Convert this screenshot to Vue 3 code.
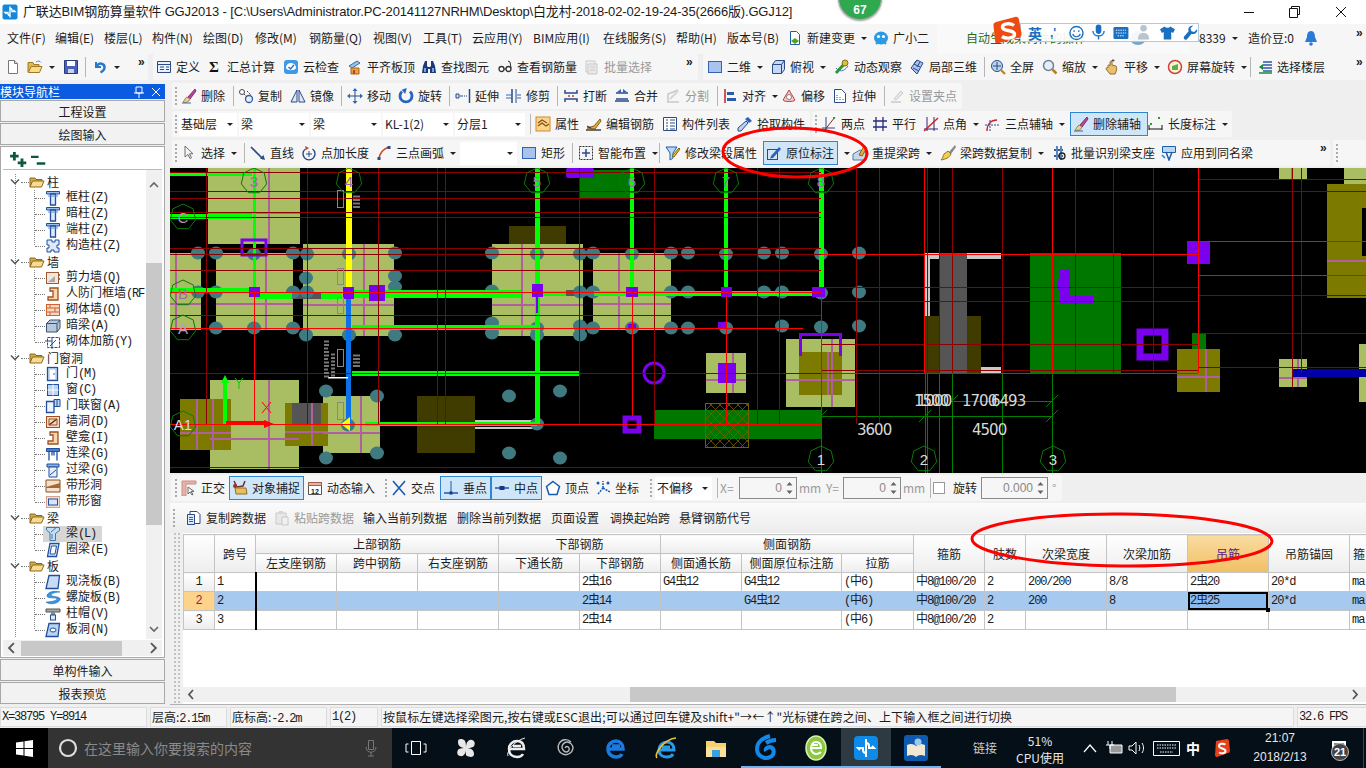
<script setup>
// toolbar icons, 16x16
const ic = {
  doc: '<path d="M3.500 1.500h6l3 3v10h-9z" fill="#fff" stroke="#777"/><path d="M9.500 1.500v3h3" fill="#ddd" stroke="#777"/>',
  open: '<path d="M1 13.500V3.500h5l1 2h5v2" fill="#e0b850" stroke="#a07820"/><path d="M1.500 13.500l2.500-6h11l-2.500 6z" fill="#f6dc8c" stroke="#a07820"/><path d="M9 3c2-1.500 4-1 5 .5" stroke="#4a8fd0" fill="none"/>',
  save: '<path d="M1.500 1.500h13v13h-13z" fill="#4a5fb8" stroke="#2a3a80"/><path d="M4 2h8v5H4z" fill="#fff"/><path d="M5 10h6v4H5z" fill="#c8d4ec"/>',
  undo: '<path d="M4 3v5h5" fill="none" stroke="#2a78c8" stroke-width="2"/><path d="M4.500 7.500C7 3 13 4 12.500 9c-.2 2-2 3.500-4 4.500" fill="none" stroke="#2a78c8" stroke-width="2.500"/>',
  table: '<path d="M1.500 2.500h13v11h-13z" fill="#e8f0fa" stroke="#2a4a88"/><path d="M1.500 5.500h13M4 8h4M4 10.500h4M10 8h3M10 10.500h3" stroke="#2a4a88"/>',
  sigma: '<text x="2" y="13" font-size="15" font-weight="700" fill="#111" font-family="Liberation Serif">Σ</text>',
  cloud: '<rect x="1" y="1" width="14" height="14" rx="3" fill="#3d9ae6"/><path d="M3 9c0-4 4-6 7-4.500 2 .5 3 2.500 3 4.500-1 3-9 3-10 0z" fill="#fff"/><path d="M5.500 8l2 2 3.500-4" fill="none" stroke="#2a78c8" stroke-width="1.500"/>',
  level: '<path d="M2 7l8-5 3 2-8 5z" fill="#9cc0e8" stroke="#3a6aa8"/><path d="M4 9h8v6H4z" fill="#e8a040" stroke="#a86818"/><path d="M6 11h2v4H6z" fill="#c04020"/>',
  binoc: '<path d="M2 7l2-5h2v5l1 1h2l1-1V2h2l2 5 1 7H9v-4H7v4H1z" fill="#1c3a78"/><path d="M3 9h2v4H3zM11 9h2v4h-2z" fill="#7fa0d8"/>',
  glasses: '<circle cx="4.500" cy="10" r="2.500" fill="#fff" stroke="#333" stroke-width="1.300"/><circle cx="11.500" cy="10" r="2.500" fill="#fff" stroke="#333" stroke-width="1.300"/><path d="M7 10h2M14 9l-1-6-2-1" stroke="#333" fill="none"/>',
  batch: '<path d="M2 2h9v11H2z" fill="#eee" stroke="#bbb"/><path d="M4 5h9v10H4z" fill="#e4e4e4" stroke="#bbb"/><path d="M6 8h5M6 11h5" stroke="#bbb"/>',
  rect: '<rect x="1.500" y="2.500" width="13" height="11" fill="#a8c4ee" stroke="#3563b0"/>',
  cube: '<path d="M2.500 5.500l3-4h9v9l-3 4h-9z" fill="#c4d8f0" stroke="#2a4a88"/><path d="M2.500 5.500h9v9M11.500 5.500l3-4" fill="none" stroke="#2a4a88"/>',
  orbit: '<path d="M2 14L12 3" stroke="#2a9a2a" stroke-width="3"/><circle cx="11" cy="4" r="3" fill="#d8c040" stroke="#807018"/><path d="M2 9c3 4 8 4 12-2" fill="none" stroke="#4878b8"/>',
  cubes: '<path d="M8 1l6 3-6 11-6-6z" fill="#a8c4ee" stroke="#2a4a88"/><path d="M5 5l6 3M4 9l6 3M8 1l-3 4M11 3L8 8" stroke="#2a4a88" fill="none"/>',
  zoomall: '<circle cx="7" cy="7" r="5.500" fill="#bcd4f0" stroke="#2a4a88"/><path d="M7 3v8M3 7h8" stroke="#2a4a88"/><path d="M11 11l4 4" stroke="#b88020" stroke-width="2.200"/>',
  zoom: '<circle cx="6.500" cy="6.500" r="5" fill="#e4eefa" stroke="#708090" stroke-width="1.500"/><path d="M10.500 10.500l4 4" stroke="#b88020" stroke-width="2.500"/>',
  hand: '<path d="M4 7c0-2 2-1 2 0V3c0-1 2-1 2 0v3l4 1c1 1 1 5-1 8H6L2 10c0-1 1-2 2-1z" fill="#e8c070" stroke="#907030"/><path d="M9 0v3M7.500 1.500h3" stroke="#555"/>',
  spin: '<circle cx="8" cy="8" r="6.500" fill="#fdf4c8" stroke="#d04040" stroke-width="1.500"/><path d="M5 7l6-2v6H5z" fill="#58b058"/>',
  layers: '<path d="M2 8l4-3v6z" fill="#1a8a3a"/><path d="M6 3h9M6 6h9M6 9h9M6 12h9" stroke="#2a5aa8" stroke-width="1.500"/><path d="M2 14h13" stroke="#1a8a3a" stroke-width="1.500"/>',
  erase: '<path d="M14 1L7 9l2 2 6-8z" fill="#c040a0" stroke="#803070"/><path d="M6 9c-2 1-2 3-4 5 3 1 6 0 7-3z" fill="#e8d090" stroke="#a08040"/><path d="M1 15h9" stroke="#3a6aa8"/>',
  copy: '<circle cx="4" cy="4" r="2.500" fill="#fff" stroke="#445"/><circle cx="11" cy="11" r="3.500" fill="#e8eef8" stroke="#2a5aa8" stroke-width="1.300"/><path d="M6 6l3 3M9 3l4 4" stroke="#445" stroke-dasharray="2 1"/>',
  mirror: '<path d="M7 2v12H1zM9 2v12h6z" fill="#dfe8f4" stroke="#2a4a88"/>',
  move: '<path d="M8 1v14M1 8h14" stroke="#2a4a88"/><path d="M8 0l2.500 3h-5zM8 16l2.500-3h-5zM0 8l3 2.500v-5zM16 8l-3 2.500v-5z" fill="#2a6ab8"/>',
  rot: '<path d="M4 3.500a6 6 0 1 0 8 0" fill="none" stroke="#2a62c0" stroke-width="2.800"/><path d="M8 0v6L3.500 3z" fill="#2a62c0" transform="rotate(15 8 3)"/>',
  extend: '<path d="M14.500 1v14" stroke="#2a4a88" stroke-width="1.500"/><path d="M1 6h3v4H1zM5 8h3" fill="#cfe0f5" stroke="#2a4a88"/><path d="M9 8h4" stroke="#2a4a88" stroke-dasharray="1 1"/>',
  trim: '<path d="M6 1v14" stroke="#2a4a88" stroke-width="1.500"/><path d="M10 1v14" stroke="#2a4a88"/><path d="M0 7h6M11 7h4M0 10h6M11 10h4" stroke="#2a6ab8"/>',
  brk: '<path d="M2 2v3h12V2M2 14v-3h12v3" fill="none" stroke="#2a4a88" stroke-width="1.500"/><path d="M5 8h2M9 8h2" stroke="#c04030" stroke-width="1.500"/>',
  merge: '<path d="M2 5h12M2 11h12M1 13h14" fill="none" stroke="#2a4a88" stroke-width="1.500"/><path d="M7 1L3 4l4 1zM9 1l4 3-4 1z" fill="#2a6ab8"/>',
  split: '<path d="M2 14h12M3 14V6l10-4" fill="none" stroke="#bbb" stroke-width="1.500"/><path d="M5 11l8-8" stroke="#ccc" stroke-width="2"/>',
  align: '<path d="M3 1v14" stroke="#c02020" stroke-width="1.500"/><path d="M5 4h7v3H5zM5 10h9v3H5z" fill="#2a5aa8"/>',
  offset: '<path d="M8 2l6 10c-1 2-11 2-12 0z" fill="#f5c8c8" stroke="#c04040"/><circle cx="8" cy="9" r="2.500" fill="#fff" stroke="#808080"/>',
  stretch: '<path d="M2.500 1.500h7l4 4v9h-11z" fill="#fff" stroke="#2a4a88"/><path d="M5 7v5M8 9v3M11 11v1" stroke="#2a4a88" stroke-dasharray="1 1"/>',
  griph: '<path d="M2 14h10" stroke="#bbb" stroke-width="1.500"/><path d="M5 11l7-8 2 2-7 7z" fill="#e4e4e4" stroke="#bbb"/>',
  attr: '<rect x="1" y="1" width="14" height="14" fill="#f8d48c" stroke="#d88828"/><path d="M3 10l4-3 4 3 3-2M3 7l4-3 5 3" fill="none" stroke="#8a5010" stroke-width="1.300"/>',
  edit: '<path d="M1 12l7-2 6-7 1 2-6 8z" fill="#e8a840" stroke="#806010"/><path d="M0 14h15" stroke="#222" stroke-width="1.300"/><path d="M1 10l4 2" stroke="#222"/>',
  list: '<path d="M1.500 1.500h13v13h-13z" fill="#fff" stroke="#2a4a88"/><path d="M4 4h2M4 7h2M4 10h2M4 13h2M8 4h5M8 7h5M8 10h5M8 13h5" stroke="#2a4a88"/>',
  dropper: '<path d="M11 1l4 4-3 2-4-4z" fill="#2a62c0"/><path d="M9 5l2 2-7 8H1v-3z" fill="#bcd4f0" stroke="#2a4a88"/>',
  two: '<path d="M1 12h13M5 1v14" stroke="#2a4a88"/><path d="M3 15L14 1" stroke="#a02020"/><rect x="12" y="1" width="2" height="2" fill="#2a9a2a"/>',
  para: '<path d="M4 1v14M11 1v14M1 5h14M1 11h14" stroke="#2a2a80" stroke-width="1.300"/>',
  angle: '<path d="M4 1v14M11 1v14M1 13h14" stroke="#2a2a80"/><path d="M1 15L15 2" stroke="#d02020" stroke-width="1.500"/>',
  tri: '<path d="M2 15C2 8 6 4 12 4" fill="none" stroke="#d02020" stroke-width="1.400"/><path d="M0 9h15M5 4v11" stroke="#2a4a88" stroke-dasharray="2 1"/>',
  dim: '<path d="M1 9v5M14 9v5M1 13h13" stroke="#111"/><rect x="2" y="7" width="2" height="2" fill="#2a9a2a"/><rect x="10" y="1" width="2" height="2" fill="#2a9a2a"/>',
  arrow: '<path d="M4 1v11l3-2.500 2 4 1.500-.7-2-4H12z" fill="#f4f4f4" stroke="#707070"/>',
  line: '<path d="M1 2l12 12" stroke="#2a4a88" stroke-width="1.700"/><path d="M15 15l-5-1.500 3.500-3.500z" fill="#2a4a88"/>',
  ptlen: '<path d="M11.500 4a6 6 0 1 1-7 0" fill="none" stroke="#2a4a88" stroke-width="1.400"/><path d="M8 6v6M5 9h6" stroke="#2a4a88"/><path d="M4 1l4 2-3 2z" fill="#c04020"/>',
  arc: '<path d="M3 15C3 8 7 4 13 2" fill="none" stroke="#c05030" stroke-width="1.700"/><rect x="1.500" y="12" width="3" height="3" fill="#2a4a88"/><rect x="11.500" y="1" width="3" height="3" fill="#2a4a88"/>',
  smart: '<rect x="1.500" y="1.500" width="13" height="13" fill="#f4f4f4" stroke="#333" stroke-dasharray="2 1"/><path d="M8 4v8M4 8h8" stroke="#2a4a88" stroke-width="1.500"/>',
  funnel: '<path d="M1 2h11L8 8v5l-3 2V8z" fill="#bcd8f0" stroke="#1f5fa8"/><path d="M7 11l7-8 1 1-6 8z" fill="#f0c040" stroke="#806010"/>',
  origin: '<rect x="1.500" y="4.500" width="10" height="10" fill="#d8e4f4" stroke="#2a4a88"/><path d="M5 11l8-9 2 2-8 9-3 .5z" fill="#2a62c0"/>',
  reext: '<path d="M1 15V9l7-4 6 2v8z" fill="#c8d8ec" stroke="#5078b0"/><path d="M7 10l5-9 3 2-5 8z" fill="#e8a840" stroke="#906010"/>',
  broom: '<path d="M15 0L9 7l2 2 5-7z" fill="#888"/><path d="M8 6l3 3c-2 4-5 5-10 6 2-2 2-4 3-6z" fill="#f0d050" stroke="#907820"/>',
  batchrec: '<path d="M3 4h9v2H3zM3 10h9v2H3z" fill="#2a5a98"/><path d="M5 1h2v14H5zM9 1h2v14H9z" fill="#5a84c0"/><circle cx="11" cy="11" r="3" fill="none" stroke="#222" stroke-width="1.300"/>',
  apply: '<path d="M1.500 1.500h13v6h-13z" fill="#bcd8f0" stroke="#1f5fa8"/><path d="M5 7l3 8 3-8" fill="none" stroke="#1f5fa8" stroke-width="1.500"/><path d="M1 10l3 3" stroke="#2a7ad0" stroke-width="1.500"/>',
  ortho: '<path d="M1 1h14v3H5v12H1z" fill="#e8b0a8" stroke="#c89088"/><path d="M7 7v7l2-2 2 3 1-.6-2-3h3z" fill="#fff" stroke="#666"/>',
  snap: '<path d="M2 1l3 6 6-1 2-5" fill="none" stroke="#703030" stroke-width="1.500"/><path d="M3 8h11l1 6H4z" fill="#e8c060" stroke="#907020"/><circle cx="3" cy="6" r="2" fill="#a03020"/>',
  dyn: '<path d="M1.500 2.500h13v12h-13z" fill="#fff" stroke="#555"/><path d="M1.500 2.500h13v3h-13z" fill="#e8b0a8" stroke="#a06050"/><text x="4" y="13.500" font-size="7" font-weight="700" fill="#222" font-family="Liberation Sans">12</text>',
  cross: '<path d="M2 1l12 14M14 1L2 15" stroke="#1a5ab0" stroke-width="1.600"/>',
  perp: '<path d="M1 13h14" stroke="#1a5ab0" stroke-width="1.500"/><path d="M8 1v11" stroke="#1a5ab0"/><rect x="6.500" y="11.500" width="3" height="3" fill="#1a3a80"/>',
  mid: '<path d="M1 8h14" stroke="#1a5ab0" stroke-width="1.500"/><rect x="5.500" y="6" width="5" height="4" fill="#1a3a80"/>',
  vertex: '<path d="M8 1.500l6.500 5-2.500 8H4l-2.500-8z" fill="#fff" stroke="#1a5ab0" stroke-width="1.500"/>',
  coord: '<path d="M3 14l5-6M8 8V1M8 8l7 4" stroke="#1a5ab0" stroke-dasharray="2 1" stroke-width="1.500" fill="none"/><circle cx="3" cy="3" r="1.500" fill="#1a5ab0"/><circle cx="13" cy="3" r="1.500" fill="#1a5ab0"/>',
  sheet: '<path d="M4 1.500h7l3 3v9H4z" fill="#fff" stroke="#2a4a88"/><path d="M1.500 4.500h7v10h-7z" fill="#dfe8f6" stroke="#2a4a88"/><path d="M3 7.500h4M3 9.500h4M3 11.500h4" stroke="#2a62c0"/>',
  paste: '<path d="M2 3h10v11H2z" fill="#e4e4e4" stroke="#bbb"/><path d="M5 1h4v3H5z" fill="#ccc"/><path d="M8 7h6v8H8z" fill="#f0f0f0" stroke="#bbb"/>',
  logo: '<rect x=".5" y=".5" width="15" height="15" rx="2" fill="#1287dc"/><path d="M8 2.500v11M8 4.500a2 2 0 0 1 2 2v1H13l-1.500-1.500M8 11.500a2 2 0 0 1-2-2v-1H3l1.500 1.500" fill="none" stroke="#fff" stroke-width="1.400"/>',
  newdoc: '<path d="M3.500 1.500h6l3 3v10h-9z" fill="#fff" stroke="#1f5fa8"/><path d="M8 8l4 3-4 3-4-3z" fill="#55a020"/>',
  bot: '<ellipse cx="8" cy="8" rx="7" ry="6.500" fill="#2a9ae8"/><circle cx="5.500" cy="6.500" r="1.600" fill="#fff"/><circle cx="10.500" cy="6.500" r="1.600" fill="#fff"/><path d="M3 14l2-2M13 14l-2-2" stroke="#2a9ae8" stroke-width="2"/>',
  bell: '<path d="M8 1c3 0 4 3 4 6l2 5H2l2-5c0-3 1-6 4-6z" fill="#2a7ad8"/><circle cx="8" cy="14" r="1.800" fill="#2a7ad8"/>',
  folder: '<path d="M1 13V4h5l1 1.500h6V7" fill="#d4aa48" stroke="#8a6a20"/><path d="M1 13l2.500-6H15l-2.500 6z" fill="#f6dc8c" stroke="#8a6a20"/>',
  column: '<path d="M1.500 1.500h13v2.500h-13z" fill="#9cc0ec" stroke="#1f4fa0"/><path d="M5.500 4h5v11h-5z" fill="#dfe9f8" stroke="#1f4fa0" stroke-width="1.300"/><path d="M3 6h10" stroke="#5c8ad0"/>',
  gear: '<path d="M4 2h3v2h3V2h4v5h-2v3h2v4H9v-2H6v2H2v-4h2V7H2V2z" fill="#dfe9f8" stroke="#1f4fa0"/>',
  shear: '<rect x="1.500" y="2.500" width="12" height="11" fill="#f0e8e0" stroke="#a05a30"/><path d="M3 12l7-6v6z" fill="#b0a8a0"/><path d="M14.500 4v2M14.500 8v2" stroke="#d06020"/>',
  bracket: '<path d="M5 2h8v12H3v-3h5V5H5z" fill="#f8d8b0" stroke="#a05020" stroke-width="1.300"/>',
  brick: '<rect x="1.500" y="2.500" width="13" height="11" fill="#f8d8c0" stroke="#d06030"/><path d="M1.500 6h13M1.500 10h13M5 2.500V6M10 6v4M5 10v3.500" stroke="#d06030"/>',
  hbeam: '<path d="M1.500 5.500L5 2h10v8l-3 4H1.500z" fill="#b8c8dc" stroke="#3a5070"/><path d="M1.500 5.500H12v8.500M12 5.500L15 2" fill="none" stroke="#3a5070"/>',
  rebar: '<rect x="2.500" y="3.500" width="12" height="10" fill="none" stroke="#1f4fa0" stroke-dasharray="3 1"/><path d="M0 7h7M7 3v12M5 12l6-6" stroke="#1f4fa0"/>',
  door: '<rect x="2.500" y="1.500" width="10" height="13" fill="#c4d8f4" stroke="#1f4fa0" stroke-width="1.300"/><path d="M5 4h5v9H5z" fill="#fff"/><circle cx="9" cy="8" r=".8" fill="#1f4fa0"/>',
  win: '<rect x="2.500" y="2.500" width="11" height="11" fill="#bcd4f2" stroke="#1f4fa0"/><path d="M8 2.500v11M2.500 8h11" stroke="#fff"/>',
  dwin: '<path d="M9 1.500h6v7H9z" fill="#bcd4f2" stroke="#1f4fa0"/><path d="M1.500 3.500H9v11H1.500z" fill="#eef4fc" stroke="#1f4fa0" stroke-width="1.300"/><path d="M12 1.500v7" stroke="#1f4fa0"/>',
  hole: '<rect x="1.500" y="2.500" width="13" height="11" fill="#f8d8c0" stroke="#a05020"/><path d="M4 11l8-6" stroke="#4a2a10" stroke-width="1.300"/><path d="M4 5h8v6H4z" fill="none" stroke="#a05020"/>',
  link: '<path d="M1.500 2.500h13v3h-13z" fill="#4a7cc8" stroke="#1f4fa0"/><path d="M4 5.500v9M12 5.500v9M7 5.500v4M9 5.500v4" stroke="#1f4fa0" stroke-width="1.300"/>',
  lintel: '<path d="M2 2h12v3H2z" fill="#8ab0e4" stroke="#1f4fa0"/><path d="M4 5h8v10H4z" fill="#e6eefa" stroke="#1f4fa0"/><path d="M5 13l6-5" stroke="#1f4fa0"/>',
  shole: '<path d="M1 2h14v12H1z" fill="#f4e0cc" stroke="#8a5020"/><path d="M1 9l14-4v5H1z" fill="#a86830"/>',
  swin: '<rect x="1.500" y="2.500" width="13" height="11" fill="#f4dcd0" stroke="#d8a090"/><rect x="3.500" y="5" width="9" height="6" fill="#d8e4f8" stroke="#1f4fa0"/>',
  beam: '<path d="M1.500 1.500h13v3l-4 3v7H5V7l-3.500-3z" fill="#c4dcf4" stroke="#3a78b0"/><path d="M6 6l6-5M7 13V8" stroke="#3a78b0"/>',
  ring: '<path d="M5 1.500h9l-2.500 13h-9z" fill="#dde9f8" stroke="#1f4fa0" stroke-width="1.300"/><path d="M6.500 4h5l-1.500 8H5z" fill="#fff" stroke="#1f4fa0"/>',
  slab: '<path d="M4 1.500h10.500l-1.500 13H1z" fill="#c8dcf6" stroke="#1f4fa0" stroke-width="1.300"/>',
  spiral: '<path d="M15 2c-8-2-13 1-13 4s10 1 10 3-8 3-11 3c3 3 12 2 14-2s-9-3-9-5 6-3 9-3z" fill="#3a96e0" stroke="#1f6fc0" stroke-width=".6"/>',
  cap: '<path d="M1 3h14v3H1z" fill="#a8a8a8" stroke="#555"/><path d="M6 6h4v3H6z" fill="#888"/><rect x="5.500" y="9" width="5" height="5" fill="#dfe9f8" stroke="#1f4fa0"/>',
  shole2: '<path d="M4 1.500h10.500l-1.500 13H1z" fill="#bcd4f2" stroke="#1f4fa0" stroke-width="1.300"/><ellipse cx="8" cy="8" rx="3" ry="2" fill="#fff" stroke="#1f4fa0"/>',
  avatar: '<ellipse cx="8" cy="8" rx="8" ry="7" fill="#7aa6c8"/>',
}

// tools are listed by the x where they start; widths follow from the next one
const T = (x, i, t, o = {}) => ({ k: 'tool', x, i, t, ...o })
const S = x => ({ k: 'sep', x })
const G = x => ({ k: 'grip', x })
const P = x => ({ k: 'gap', x })
const M = x => ({ k: 'more', x })
const C = (x, t) => ({ k: 'combo', x, t })
const N = (x, t) => ({ k: 'num', x, t })
const X = x => ({ k: 'chk', x })

function bar(start, end, items, cls = '') {
  const list = items.map((it, n) => {
    const next = items[n + 1]
    return { ...it, w: (next ? next.x : end) - it.x }
  })
  return { start, end, cls, pad: items[0].x - start, items: list }
}

const rows = [
  { cls: 'r-menu', origin: 0, bars: [
    bar(0, 937, [
      T(7, null, '文件(F)'), T(55, null, '编辑(E)'), T(104, null, '楼层(L)'), T(152, null, '构件(N)'),
      T(203, null, '绘图(D)'), T(255, null, '修改(M)'), T(309, null, '钢筋量(Q)'), T(373, null, '视图(V)'),
      T(423, null, '工具(T)'), T(472, null, '云应用(Y)'), T(533, null, 'BIM应用(I)'),
      T(603, null, '在线服务(S)'), T(676, null, '帮助(H)'), T(727, null, '版本号(B)'),
      T(787, 'newdoc', '新建变更', { caret: 1 }), T(873, 'bot', '广小二'),
    ], 'plain'),
    bar(937, 1190, [T(966, null, '自动生成梁构件的操作', { green: 1 }), T(1130, 'avatar', '')], 'tab'),
    bar(1190, 1366, [T(1199, null, '8339', { caret: 1 }), T(1248, null, '造价豆:0'), T(1303, 'bell', ''), M(1356)], 'plain'),
  ] },
  { cls: 'r-top', origin: 0, bars: [
    bar(0, 148, [T(5, 'doc', ''), T(27, 'open', '', { caret: 1 }), T(63, 'save', ''), S(85), T(92, 'undo', '', { caret: 1 }), M(138)]),
    bar(153, 698, [
      T(156, 'table', '定义'), T(207, 'sigma', '汇总计算'), T(283, 'cloud', '云检查'), T(347, 'level', '平齐板顶'),
      T(421, 'binoc', '查找图元'), T(497, 'glasses', '查看钢筋量'), T(584, 'batch', '批量选择', { off: 1 }), M(686),
    ]),
    bar(703, 1366, [
      T(707, 'rect', '二维', { caret: 1 }), T(770, 'cube', '俯视', { caret: 1 }), T(834, 'orbit', '动态观察'),
      T(909, 'cubes', '局部三维'), S(984), T(990, 'zoomall', '全屏'), T(1042, 'zoom', '缩放', { caret: 1 }),
      T(1104, 'hand', '平移', { caret: 1 }), T(1167, 'spin', '屏幕旋转', { caret: 1 }), S(1250),
      T(1257, 'layers', '选择楼层'), M(1356),
    ]),
  ] },
  { cls: 'r-a', origin: 170, bars: [
    bar(172, 962, [
      G(175), T(181, 'erase', '删除'), S(233), T(238, 'copy', '复制'), T(290, 'mirror', '镜像'), S(341),
      T(347, 'move', '移动'), T(398, 'rot', '旋转'), S(449), T(455, 'extend', '延伸'), T(506, 'trim', '修剪'), S(557),
      T(563, 'brk', '打断'), T(614, 'merge', '合并'), T(665, 'split', '分割', { off: 1 }), S(717),
      T(722, 'align', '对齐', { caret: 1 }), T(781, 'offset', '偏移'), T(832, 'stretch', '拉伸'), S(884),
      T(889, 'griph', '设置夹点', { off: 1 }),
    ]),
  ] },
  { cls: 'r-b', origin: 170, bars: [
    bar(172, 810, [
      G(175), C(179, '基础层'), C(239, '梁'), C(311, '梁'), C(383, 'KL-1(2)'), C(455, '分层1'), S(530),
      T(535, 'attr', '属性'), T(586, 'edit', '编辑钢筋'), T(662, 'list', '构件列表'), T(737, 'dropper', '拾取构件'),
    ]),
    bar(812, 1232, [
      G(815), T(821, 'two', '两点'), T(872, 'para', '平行'), T(923, 'angle', '点角', { caret: 1 }),
      T(985, 'tri', '三点辅轴', { caret: 1 }), T(1070, 'erase', '删除辅轴', { on: 1 }), T(1148, 'dim', '长度标注', { caret: 1 }),
    ]),
  ] },
  { cls: 'r-c', origin: 170, bars: [
    bar(172, 1330, [
      G(175), T(181, 'arrow', '选择', { caret: 1 }), S(244), T(250, 'line', '直线'), T(301, 'ptlen', '点加长度'),
      T(376, 'arc', '三点画弧', { caret: 1 }), C(460, ''), T(521, 'rect', '矩形'), S(572), T(578, 'smart', '智能布置', { caret: 1 }), S(659),
      T(665, 'funnel', '修改梁段属性'), T(763, 'origin', '原位标注', { on: 1 }), T(838, null, '', { caret: 1 }),
      T(852, 'reext', '重提梁跨', { caret: 1 }), T(940, 'broom', '梁跨数据复制', { caret: 1 }),
      T(1051, 'batchrec', '批量识别梁支座'), T(1161, 'apply', '应用到同名梁'), M(1320),
    ]),
    bar(1333, 1366, [G(1336)]),
  ] },
  { cls: 'r-snap', origin: 170, bars: [
    bar(171, 1062, [
      G(175), T(181, 'ortho', '正交'), T(229, 'snap', '对象捕捉', { on: 1 }), P(304), T(307, 'dyn', '动态输入'), G(385),
      T(391, 'cross', '交点'), T(440, 'perp', '垂点', { on: 1 }), T(491, 'mid', '中点', { on: 1 }), P(542),
      T(545, 'vertex', '顶点'), T(595, 'coord', '坐标'), G(650), C(655, '不偏移'), S(717),
      T(720, null, 'X=', { off: 1 }), N(739, '0'), T(799, null, 'mm', { off: 1 }), T(826, null, 'Y=', { off: 1 }), N(843, '0'),
      T(903, null, 'mm', { off: 1 }), S(930), X(933), T(953, null, '旋转'), N(981, '0.000'), T(1052, null, '°', { off: 1 }),
    ]),
  ] },
  { cls: 'r-tbl', origin: 170, bars: [
    bar(170, 1366, [
      G(173), T(186, 'sheet', '复制跨数据'), T(274, 'paste', '粘贴跨数据', { off: 1 }), T(363, null, '输入当前列数据'),
      T(457, null, '删除当前列数据'), T(551, null, '页面设置'), T(610, null, '调换起始跨'), T(679, null, '悬臂钢筋代号'),
    ], 'plain'),
  ] },
]
rows.forEach(r => {
  let edge = r.origin
  r.bars.forEach(b => { b.ml = b.start - edge; edge = b.end })
})

// module tree
const tree = [
  { t: '柱', kids: [['框柱', '(Z)', 'column'], ['暗柱', '(Z)', 'column'], ['端柱', '(Z)', 'column'], ['构造柱', '(Z)', 'gear']] },
  { t: '墙', kids: [['剪力墙', '(Q)', 'shear'], ['人防门框墙', '(RF', 'bracket'], ['砌体墙', '(Q)', 'brick'], ['暗梁', '(A)', 'hbeam'], ['砌体加筋', '(Y)', 'rebar']] },
  { t: '门窗洞', kids: [['门', '(M)', 'door'], ['窗', '(C)', 'win'], ['门联窗', '(A)', 'dwin'], ['墙洞', '(D)', 'hole'], ['壁龛', '(I)', 'bracket'], ['连梁', '(G)', 'link'], ['过梁', '(G)', 'lintel'], ['带形洞', '', 'shole'], ['带形窗', '', 'swin']] },
  { t: '梁', kids: [['梁', '(L)', 'beam', 1], ['圈梁', '(E)', 'ring']] },
  { t: '板', kids: [['现浇板', '(B)', 'slab'], ['螺旋板', '(B)', 'spiral'], ['柱帽', '(V)', 'cap'], ['板洞', '(N)', 'shole2']] },
]

// table
const colW = [31, 41, 81, 81, 81, 81, 81, 81, 100, 72, 71, 41, 81, 81, 81, 81, 81]
const tRows = [
  { no: 1, cells: ['1', '', '', '', '', '2虫16', 'G4虫12', 'G4虫12', '(中6)', '中8@100/20', '2', '200/200', '8/8', '2虫20', '20*d', 'ma'] },
  { no: 2, sel: true, cells: ['2', '', '', '', '', '2虫14', '', 'G4虫12', '(中6)', '中8@100/20', '2', '200', '8', '2虫25', '20*d', 'ma'] },
  { no: 3, cells: ['3', '', '', '', '', '2虫14', '', '', '(中6)', '中8@100/20', '2', '', '', '', '', 'ma'] },
]

// drawing canvas, in screen coordinates
const fills = [
  ['#a9bd62', [[208,168,92,76],[303,244,91,92],[170,253,31,77],[216,253,77,77],[492,244,91,92],[593,253,78,77],[210,380,89,89],[323,396,57,57],[706,353,40,40],[786,339,69,68],[1279,168,28,11],[1344,168,22,40],[1279,359,28,28],[1359,344,7,58]]],
  ['#7d7a00', [[180,399,51,51],[285,403,43,43],[799,352,43,43],[1177,349,43,43],[1327,184,39,114]]],
  ['#000', [[1362,208,4,48]]],
  ['#403c00', [[509,226,57,18],[417,396,58,57],[924,316,57,57]]],
  ['#007800', [[580,170,50,28],[654,410,167,29],[1030,253,91,120],[1192,333,14,16]]],
  ['#c8c8c8', [[924,253,77,6],[924,253,6,63],[981,367,20,6],[475,420,59,2],[475,427,59,2]]],
  ['#555', [[939,253,28,120],[292,293,29,6],[566,290,28,6],[292,403,29,21]]],
]
const mauve = [
  [269,168,76],[176,253,77],[266,253,77],[364,244,92],[522,244,92],[619,253,77],[269,380,89],[197,399,51],[213,399,51],[312,403,43],[361,396,57],[733,353,40],[828,352,43],[832,339,68],[1206,349,43],[1298,359,28],[1292,168,11],
].map(([x, y, h]) => `M${x} ${y}v${h}`).concat([
  [208,213,92],[170,304,31],[216,304,77],[303,305,91],[492,305,91],[593,304,78],[210,439,89],[180,433,51],[285,432,43],[323,433,57],[706,380,40],[786,380,69],[1177,377,43],[1279,378,28],[1327,261,39],
].map(([x, y, w]) => `M${x} ${y}h${w}`)).join('')

const hl = (y, a, b) => `M${a} ${y + 0.5}H${b}`
const vl = (x, a, b) => `M${x + 0.5} ${a}V${b}`
const darkRed = [
  ...[172,198,212,217,248,254,270,315,373,467].map(y => hl(y, 170, 821)),
  hl(191, 170, 1366),
  ...[287,301,344,370].map(y => hl(y, 821, 1198)),
  ...[179,295,333,367].map(y => hl(y, 1198, 1366)),
  ...[206,307,378,437,445,579,654,757,779,856,879].map(x => vl(x, 168, 424)),
  ...[927,939,952,1002,1075,1113,1153,1301].map(x => vl(x, 168, 373)),
  vl(1292, 168, 387),
].join('')
const red = [
  hl(292, 170, 821), hl(328, 170, 803), hl(424, 170, 821), hl(254, 821, 1198), hl(373, 821, 1198), hl(241, 1198, 1366), hl(275, 1198, 1366),
  vl(254, 292, 424), vl(632, 296, 416), vl(726, 296, 424), vl(821, 296, 373), vl(924, 168, 373), vl(1052, 168, 373), vl(1198, 168, 373),
].join('')
const grid = [
  ...[821,925,927,939,952,1002,1052].map(x => vl(x, 373, 473)),
  hl(401, 952, 1052), hl(416, 821, 1052),
  ...[[821,416],[925,416],[1052,416],[952,401],[1002,401],[1052,401]].map(([x, y]) => `M${x - 6} ${y + 6}L${x + 6} ${y - 6}`),
].join('')

const piles = [
  [198,253],[216,253],[254,254],[293,253],[307,254],[349,254],[395,253],[492,253],[537,254],[580,254],[593,253],[632,254],[671,253],[688,253],[726,254],[764,253],[782,253],[821,254],[859,253],
  [306,278],[395,276],[198,292],[216,292],[293,292],[307,292],[395,287],[492,291],[580,292],[593,292],[671,292],[688,292],[764,292],[782,292],[821,293],[859,292],
  [216,328],[254,328],[293,328],[492,323],[537,328],[580,326],[593,328],[632,328],[671,328],[688,328],[726,328],[782,326],[821,327],[859,326],
  [306,335],[349,335],[395,335],[492,333],[537,335],[580,335],
  [326,391],[377,396],[509,396],[560,391],[326,458],[377,453],[509,453],[560,458],[537,424],[348,425],
]
const beams = [
  [170,172,82,4],[170,214,82,5],[170,288,80,5],[255,293,37,6],[321,293,21,6],[354,290,167,8],[543,291,23,5],[594,291,218,5],[352,325,185,5],[352,371,227,5],[365,422,172,4],
  [253,168,3,122],[535,168,5,256],[630,168,4,122],[724,168,4,122],[819,168,5,122],
]
const purple = [
  [249,287,11,10],[343,287,11,12],[369,285,16,16],[532,284,11,13],[536,297,2,16],[626,287,12,10],[721,287,11,10],[628,324,8,5],[718,322,9,6],[718,363,18,20],[812,287,13,10],
  [1060,270,10,34],[1058,279,3,11],[1060,296,33,8],[1187,241,23,23],
]
const frames = [[242,240,24,15,3],[625,418,14,13,5],[1140,332,25,25,7]]
const grayBoxes = [[337,190,6,17],[337,268,6,16],[337,297,6,16],[337,349,6,17],[337,402,6,17]]
const heptagon = (cx, cy) => Array.from({ length: 7 }, (_, n) => {
  const a = -Math.PI / 2 + (n * 2 * Math.PI) / 7
  return `${(cx + 13 * Math.cos(a)).toFixed(1)},${(cy + 13 * Math.sin(a)).toFixed(1)}`
}).join(' ')
const bubbles = [
  [254,181,'3','#9370a8'],[349,181,'4','#9370a8'],[537,181,'5','#9370a8'],[632,181,'6','#9370a8'],[726,181,'7','#9370a8'],[821,181,'8','#9370a8'],
  [183,217,'C','#b090b8'],[183,293,'B','#9370a8'],[183,328,'A','#b0a0c0'],[183,424,'A1','#d8d8e8'],
  [821,459,'1','#ddd'],[924,459,'2','#ddd'],[1053,459,'3','#ddd'],
]
const dims = [[914,406,'1500'],[917,406,'1000'],[962,406,'1700'],[991,406,'6493'],[857,435,'3600'],[972,435,'4500']]
</script>

<template>
  <div class="app">
    <div class="title">
      <svg class="ic" viewBox="0 0 16 16" v-html="ic.logo" />
      <span class="title-text">广联达BIM钢筋算量软件 GGJ2013 - [C:\Users\Administrator.PC-20141127NRHM\Desktop\白龙村-2018-02-02-19-24-35(2666版).GGJ12]</span>
      <div class="winbtns">
        <svg width="14" height="14" viewBox="0 0 14 14"><path d="M2 7.500h10" stroke="#111" /></svg>
        <svg width="14" height="14" viewBox="0 0 14 14"><path d="M3.500 3.500v-2h8v8h-2M1.500 3.500h8v9h-8z" fill="none" stroke="#111" /></svg>
        <svg width="14" height="14" viewBox="0 0 14 14"><path d="M2 2l10 10M12 2L2 12" stroke="#111" /></svg>
      </div>
    </div>

    <div v-for="row in rows" :key="row.cls" class="row" :class="row.cls">
      <div
        v-for="(b, n) in row.bars"
        :key="n"
        class="bar"
        :class="b.cls"
        :style="{ marginLeft: b.ml + 'px', width: b.end - b.start + 'px', paddingLeft: b.pad + 'px' }"
      >
        <div
          v-for="(it, m) in b.items"
          :key="m"
          class="it"
          :class="{ on: it.on, off: it.off, green: it.green }"
          :style="{ width: it.w + 'px' }"
        >
          <template v-if="it.k === 'tool'">
            <svg v-if="it.i" class="ic" viewBox="0 0 16 16" v-html="ic[it.i]" />
            <span v-if="it.t" class="lbl">{{ it.t }}</span>
            <i v-if="it.caret" class="caret" />
          </template>
          <i v-else-if="it.k === 'sep'" class="sep-line" />
          <i v-else-if="it.k === 'grip'" class="grip-dots" />
          <span v-else-if="it.k === 'more'" class="more">»</span>
          <div v-else-if="it.k === 'combo'" class="combo"><span>{{ it.t }}</span><i class="caret" /></div>
          <div v-else-if="it.k === 'num'" class="num">
            <span>{{ it.t }}</span>
            <svg width="9" height="18" viewBox="0 0 9 18"><path d="M1.500 6.500L4.500 3l3 3.500zM1.500 11.500l3 3.500 3-3.500z" fill="#666" /></svg>
          </div>
          <i v-else-if="it.k === 'chk'" class="chk" />
        </div>
      </div>
    </div>

    <aside class="nav">
      <div class="nav-head">
        <span>模块导航栏</span>
        <svg width="32" height="14" viewBox="0 0 32 14"><path d="M5 2h6v6H5zM8 8v5M3 8h10" fill="none" stroke="#fff" /><path d="M21 3l8 8M29 3l-8 8" stroke="#fff" /></svg>
      </div>
      <div class="nav-btn">工程设置</div>
      <div class="nav-btn">绘图输入</div>
      <div class="nav-box">
        <svg class="plusminus" width="50" height="19" viewBox="0 0 50 20">
          <path d="M3 2h3v3h3v3H6v3H3V8H0V5h3zM11 9h3v3h3v3h-3v3h-3v-3H8v-3h3z" transform="translate(3 0)" fill="#0a5a3a" />
          <path d="M25 6h8v2.500h-8zM31 13h9v2.500h-9z" fill="#0a5a3a" />
        </svg>
        <div class="tree-wrap">
          <div class="tree">
            <template v-for="g in tree" :key="g.t">
              <div class="tn parent">
                <svg class="chev" width="10" height="8" viewBox="0 0 10 8"><path d="M1 1.500l4 4 4-4" fill="none" stroke="#555" stroke-width="1.500" /></svg>
                <i class="conn short" />
                <svg class="ic" viewBox="0 0 16 16" v-html="ic.folder" />
                <span class="tn-name">{{ g.t }}</span>
              </div>
              <div v-for="(kid, n) in g.kids" :key="kid[0] + kid[1]" class="tn child" :class="{ last: n === g.kids.length - 1 }">
                <i class="conn" />
                <span class="tn-body" :class="{ sel: kid[3] }">
                  <svg class="ic" viewBox="0 0 16 16" v-html="ic[kid[2]]" />
                  <span class="tn-name">{{ kid[0] }}<span class="key">{{ kid[1] }}</span></span>
                </span>
              </div>
            </template>
          </div>
          <div class="vscroll">
            <svg width="16" height="14" viewBox="0 0 16 14"><path d="M4 9l4-4 4 4" fill="none" stroke="#666" stroke-width="1.600" /></svg>
            <div class="v-thumb" />
            <svg width="16" height="14" viewBox="0 0 16 14"><path d="M4 5l4 4 4-4" fill="none" stroke="#666" stroke-width="1.600" /></svg>
          </div>
        </div>
        <div class="hscroll">
          <svg width="18" height="16" viewBox="0 0 18 16"><path d="M11 3L6 8l5 5" fill="none" stroke="#555" stroke-width="1.800" /></svg>
          <div class="h-thumb" />
          <svg width="18" height="16" viewBox="0 0 18 16"><path d="M7 3l5 5-5 5" fill="none" stroke="#555" stroke-width="1.800" /></svg>
        </div>
      </div>
      <div class="nav-btn">单构件输入</div>
      <div class="nav-btn">报表预览</div>
    </aside>

    <svg class="canvas" viewBox="170 168 1196 305" width="1196" height="305">
      <defs>
        <pattern id="hatch" width="9" height="9" patternUnits="userSpaceOnUse">
          <path d="M0 0l9 9M9 0L0 9" stroke="#6e5f00" stroke-width=".8" />
        </pattern>
      </defs>
      <rect x="170" y="168" width="1196" height="305" fill="#000" />
      <g v-for="f in fills" :key="f[0]" :fill="f[0]">
        <rect v-for="(r, n) in f[1]" :key="n" :x="r[0]" :y="r[1]" :width="r[2]" :height="r[3]" />
      </g>
      <path :d="mauve" stroke="#b060a0" stroke-width="2" fill="none" />
      <rect x="705.500" y="403.500" width="43" height="44" fill="url(#hatch)" stroke="#6e5f00" />
      <ellipse v-for="(p, n) in piles" :key="n" :cx="p[0]" :cy="p[1]" rx="7" ry="6.500" fill="#3f7a80" />
      <rect v-for="(b, n) in beams" :key="n" :x="b[0]" :y="b[1]" :width="b[2]" :height="b[3]" fill="#0f0" />
      <rect x="346" y="168" width="6" height="125" fill="#ff0" />
      <rect x="346" y="296" width="5" height="128" fill="#0a72e6" />
      <path d="M342 292l7-5v10zM341 424l9-7v14z" fill="#ff0" />
      <rect x="328" y="377" width="20" height="1.500" fill="#fff" />
      <g fill="#7b00ee" shape-rendering="crispEdges">
        <rect v-for="(p, n) in purple" :key="n" :x="p[0]" :y="p[1]" :width="p[2]" :height="p[3]" />
        <rect x="566" y="168" width="28" height="10" rx="3" />
      </g>
      <g fill="none" stroke="#7b00ee">
        <rect v-for="(f, n) in frames" :key="n" :x="f[0]" :y="f[1]" :width="f[2]" :height="f[3]" :stroke-width="f[4]" />
        <ellipse cx="654" cy="373" rx="10" ry="10" stroke-width="3" />
        <path d="M800.500 356v-21.500h40V356" stroke-width="3" />
      </g>
      <rect x="1293" y="369" width="73" height="8" fill="#0000a8" />
      <path :d="grid" stroke="#008000" fill="none" />
      <path :d="darkRed" stroke="#8b0000" fill="none" />
      <path :d="red" stroke="#f00" fill="none" />
      <g fill="none" stroke="#888">
        <rect v-for="(r, n) in grayBoxes" :key="n" :x="r[0] + .5" :y="r[1] + .5" :width="r[2]" :height="r[3]" />
      </g>
      <g fill="#777">
        <rect v-for="n in 11" :key="n" x="324" :y="337 + n * 3.500" :width="n % 3 ? 5 : 4" height="2" />
        <rect v-for="n in 7" :key="n" x="331" :y="350 + n * 3.500" width="4" height="2" />
        <rect v-for="n in 4" :key="n" x="353" :y="192 + n * 3.500" width="7" height="2" />
        <rect v-for="n in 4" :key="n" x="353" :y="351 + n * 3.500" width="7" height="2" />
      </g>
      <g v-for="b in bubbles" :key="b[0] + '-' + b[1]">
        <polygon :points="heptagon(b[0], b[1])" fill="none" stroke="#0a7a0a" />
        <text :x="b[0]" :y="b[1] + 6" class="cv-bubble" :fill="b[3]">{{ b[2] }}</text>
      </g>
      <text v-for="(d, n) in dims" :key="n" :x="d[0]" :y="d[1]" class="cv-dim">{{ d[2] }}</text>
      <path d="M225 424V381" stroke="#0f0" stroke-width="4" />
      <path d="M225 375l-4 8h8z" fill="#0f0" />
      <path d="M226 423h40" stroke="#f00" stroke-width="4" />
      <path d="M274 424l-10-4v8z" fill="#f00" />
      <path d="M235 378l4 5 4-5M239 383v6" stroke="#0c0" fill="none" />
      <path d="M262 402l9 11M271 402l-9 11" stroke="#f00" fill="none" />
    </svg>

    <div class="sheet">
      <table class="grid">
        <colgroup><col v-for="(w, n) in colW" :key="n" :style="{ width: w + 'px' }"></colgroup>
        <thead>
          <tr>
            <th rowspan="2" />
            <th rowspan="2">跨号</th>
            <th colspan="3">上部钢筋</th>
            <th colspan="2">下部钢筋</th>
            <th colspan="3">侧面钢筋</th>
            <th rowspan="2">箍筋</th>
            <th rowspan="2">肢数</th>
            <th rowspan="2">次梁宽度</th>
            <th rowspan="2">次梁加筋</th>
            <th rowspan="2" class="hot">吊筋</th>
            <th rowspan="2">吊筋锚固</th>
            <th rowspan="2" class="cut">箍</th>
          </tr>
          <tr>
            <th>左支座钢筋</th><th>跨中钢筋</th><th>右支座钢筋</th>
            <th>下通长筋</th><th>下部钢筋</th>
            <th>侧面通长筋</th><th>侧面原位标注筋</th><th>拉筋</th>
          </tr>
        </thead>
        <tbody>
          <tr v-for="r in tRows" :key="r.no" :class="{ cur: r.sel }">
            <th class="rowno">{{ r.no }}</th>
            <td v-for="(c, n) in r.cells" :key="n" :class="{ frz: n === 0, focus: r.sel && n === 13 }">{{ c }}</td>
          </tr>
        </tbody>
      </table>
      <div class="sheet-scroll">
        <svg width="16" height="15" viewBox="0 0 16 15"><path d="M10 3L6 7.500l4 4.500" fill="none" stroke="#555" stroke-width="1.800" /></svg>
        <div class="sheet-thumb" />
        <svg width="16" height="15" viewBox="0 0 16 15"><path d="M6 3l4 4.500L6 12" fill="none" stroke="#555" stroke-width="1.800" /></svg>
      </div>
    </div>

    <div class="status">
      <span class="st mono w1">X=38795 Y=8914</span>
      <span class="st w2">层高:<b>2.15m</b></span>
      <span class="st w3">底标高:<b>-2.2m</b></span>
      <span class="st mono w4">1(2)</span>
      <span class="st msg">按鼠标左键选择梁图元,按右键或ESC退出;可以通过回车键及shift+"→←↑"光标键在跨之间、上下输入框之间进行切换</span>
      <span class="st mono w6">32.6 FPS</span>
    </div>

    <div class="taskbar">
      <div class="start">
        <svg width="17" height="17" viewBox="0 0 17 17"><path d="M0 2.500L7.500 1.500V8H0zM8.500 1.300L17 0v8H8.500zM0 9h7.500v6.500L0 14.500zM8.500 9H17v8l-8.500-1.200z" fill="#fff" /></svg>
      </div>
      <div class="search">
        <svg width="20" height="20" viewBox="0 0 20 20"><circle cx="10" cy="10" r="8" fill="none" stroke="#ddd" stroke-width="2.200" /></svg>
        <span>在这里输入你要搜索的内容</span>
        <svg width="12" height="18" viewBox="0 0 12 18"><path d="M3.500 1.500h5v9h-5zM1 8c0 7 10 7 10 0M6 13v4M3 17h6" fill="none" stroke="#777" /></svg>
      </div>
      <div class="tb"><svg width="22" height="18" viewBox="0 0 22 18"><path d="M6.500 2.500h9v13h-9zM3.500 5H1v8h2.500M18.500 5H21v8h-2.500" fill="none" stroke="#fff" /></svg></div>
      <div class="tb"><svg width="22" height="22" viewBox="0 0 22 22"><path d="M11 11C6 11 3 9 3 5s4-3 6-2 2 5 2 8c0-5 2-9 6-8s3 6 1 7-4 1-7 1c5 0 8 2 8 6s-5 3-7 2-1-5-1-8c0 5-2 9-6 8s-3-6-1-7 4-1 7-1z" fill="#e8e8e8" /></svg></div>
      <div class="tb"><svg width="22" height="24" viewBox="0 0 22 24"><path d="M5 13h14c0-6-3-8-7-8s-8 3-8 8 3 8 8 8c3 0 5-1 6-3M8 10h8" fill="none" stroke="#eee" stroke-width="2.500" /><path d="M3 20C1 17 8 5 20 2" fill="none" stroke="#eee" /></svg></div>
      <div class="tb"><svg width="20" height="20" viewBox="0 0 20 20"><path d="M15 4a7.500 7.500 0 1 0 2 6c0-3-3-6-6-6s-5 3-5 5 2 5 4 5 4-2 3-4-3-2-4 0" fill="none" stroke="#bbb" stroke-width="1.400" /></svg></div>
      <div class="tb"><svg width="22" height="22" viewBox="0 0 22 22"><path d="M4 12h14c0-5-3-8-7-8s-8 3-8 8 4 8 8 8c3 0 5-1 6-3M7 9h8" fill="none" stroke="#1a7ae0" stroke-width="3.500" /></svg></div>
      <div class="tb"><svg width="24" height="24" viewBox="0 0 24 24"><path d="M6 14h14c0-5-3-8-7-8s-8 3-8 8 4 7 8 7c3 0 5-1 6-3M8 11h8" fill="none" stroke="#2a9ae8" stroke-width="3" /><path d="M3 22C0 18 10 3 22 2" fill="none" stroke="#f0c030" stroke-width="1.600" /></svg></div>
      <div class="tb"><svg width="22" height="20" viewBox="0 0 22 20"><path d="M1 3h8l2 2h10v14H1z" fill="#f6d170" /><path d="M1 9h20v10H1z" fill="#fbe09a" /><path d="M7 12h8v7H7z" fill="#3aa0e0" /></svg></div>
      <div class="tb run"><svg width="24" height="28" viewBox="0 0 24 28"><path d="M16 2C8 4 3 9 3 15c0 7 8 11 13 8 5-2 5-9 0-10-3 0-5 2-4 4M12 9c3-2 6-3 10-3" fill="none" stroke="#1288e8" stroke-width="4" /></svg></div>
      <div class="tb run"><svg width="24" height="28" viewBox="0 0 24 28"><ellipse cx="12" cy="14" rx="10" ry="12" fill="#8ac840" stroke="#d8f0b0" stroke-width="1.500" /><path d="M6 14h11c0-4-2-6-5-6s-5 3-5 6 2 6 5 6c2 0 4-1 5-2M8 11h6" fill="none" stroke="#fff" stroke-width="2" /></svg></div>
      <div class="tb run now"><svg width="24" height="24" viewBox="0 0 24 24"><rect width="24" height="24" rx="4" fill="#0e8ae8" /><path d="M12 3v18M12 7a3 3 0 0 1 3 3v2h5l-2-2M12 17a3 3 0 0 1-3-3v-2H4l2 2" fill="none" stroke="#fff" stroke-width="2" /></svg></div>
      <div class="tb run"><svg width="24" height="26" viewBox="0 0 24 26"><rect width="24" height="26" rx="3" fill="#0e5ab0" /><path d="M3 10c4-2 7-1 9 1 2-2 5-3 9-1v11c-4-2-7-1-9 1-2-2-5-3-9-1z" fill="#f0e8d0" /><circle cx="14" cy="7" r="3.500" fill="#9cc8f0" /></svg></div>

      <span class="tray-link">链接</span>
      <div class="cpu"><span>51%</span><span>CPU使用</span></div>
      <svg class="t1" width="16" height="10" viewBox="0 0 16 10"><path d="M2 9l6-7 6 7" fill="none" stroke="#fff" stroke-width="1.200" /></svg>
      <svg class="t2" width="18" height="16" viewBox="0 0 18 16"><path d="M5 5h12v8H5z" fill="#999" stroke="#fff" /><path d="M3 1v4M7 1v4M1 5h8M5 5v4" stroke="#fff" /></svg>
      <svg class="t3" width="18" height="16" viewBox="0 0 18 16"><path d="M1 6h3l4-4v12l-4-4H1zM11 5c1 2 1 4 0 6M14 3c2 3 2 7 0 10" fill="none" stroke="#fff" /></svg>
      <svg class="t4" width="27" height="15" viewBox="0 0 27 15"><path d="M.5.500h26v14H.5z" fill="none" stroke="#fff" /><path d="M4 4h19M4 7h19M7 11h13" stroke="#fff" stroke-dasharray="1.500 1" /></svg>
      <span class="t5">中</span>
      <svg class="t6" width="16" height="20" viewBox="0 0 16 20"><path d="M2 3l11-2c1 0 2 1 2 2l1 10c0 1-1 2-2 2L3 19c-1 0-2-1-2-2z" fill="#e84018" /><path d="M11.500 6.500C9 5 5 5.500 5 8c0 3 6.500 2 6.500 5 0 2.500-4 3-6.500 1.500" fill="none" stroke="#fff" stroke-width="2" /></svg>
      <div class="clock"><span>21:07</span><span>2018/2/13</span></div>
      <div class="notif">
        <svg width="16" height="17" viewBox="0 0 16 17"><path d="M1 1h14v15H1z" fill="#fff" /><path d="M3 4h10M3 7h10M3 10h10" stroke="#111" /></svg>
        <span class="badge">21</span>
      </div>
      <i class="edge" />
    </div>

    <!-- things that float over the application window -->
    <div class="ball">67</div>
    <div class="ime">
      <svg class="ime-s" width="29" height="28" viewBox="0 0 29 28"><path d="M3 6l19-5c2-.5 3.500.5 4 2.500l2.500 14c.3 2-.5 3.500-2.500 4L6 27c-2 .5-3.500-.5-4-2.500L.5 10C.2 8 1 6.500 3 6z" fill="#ef4a12" /><path d="M21 9.500C17 6.500 9 7.500 9.500 11.500c.5 4 11.500 2 12 6.500.5 4-8 5.500-12.500 2.500" fill="none" stroke="#fff" stroke-width="3.400" /></svg>
      <b>英</b>
      <span class="ime-c">,'</span>
      <svg width="16" height="16" viewBox="0 0 16 16"><circle cx="8" cy="8" r="7" fill="none" stroke="#1a70c0" stroke-width="1.500" /><path d="M4 9c1 4 7 4 8 0M5.500 5v2M10.500 5v2" fill="none" stroke="#1a70c0" stroke-width="1.300" /></svg>
      <svg width="14" height="17" viewBox="0 0 14 17"><rect x="4" y="0" width="6" height="10" rx="3" fill="#1a70c0" /><path d="M1 7c0 7 12 7 12 0M7 12v4" fill="none" stroke="#1a70c0" stroke-width="1.500" /></svg>
      <svg width="17" height="14" viewBox="0 0 17 14"><rect x=".5" y=".5" width="16" height="13" rx="1.500" fill="#1a70c0" /><path d="M3 4h11M3 7h11M5 10h7" stroke="#fff" stroke-dasharray="1.500 1" /></svg>
      <svg width="16" height="17" viewBox="0 0 16 17"><circle cx="7" cy="4" r="3.500" fill="#b8c4d0" /><path d="M1 16c0-6 3-7 6-7s6 1 6 7z" fill="#b8c4d0" /></svg>
      <svg width="16" height="16" viewBox="0 0 16 16"><path d="M5 1L0 4l2 4 2-1v8h8V7l2 1 2-4-5-3c-1 2-5 2-6 0z" fill="#1a70c0" /></svg>
      <svg width="16" height="16" viewBox="0 0 16 16"><path d="M15 4l-3 3-3-1-1-3 3-3C7 0 5 3 6 6L1 12c-1 2 1 4 3 3l5-6c4 1 7-2 6-5z" fill="#1a70c0" /></svg>
    </div>
    <svg class="marks" width="1366" height="768" viewBox="0 0 1366 768">
      <ellipse cx="795" cy="152.500" rx="72" ry="24.500" transform="rotate(1 795 152)" />
      <ellipse cx="1122" cy="540" rx="150" ry="26" transform="rotate(0.500 1122 540)" />
    </svg>
  </div>
</template>

<style>
html, body { margin: 0; background: #f0f0f0; overflow: hidden; }
</style>

<style scoped>
.app {
  position: relative;
  width: 1366px;
  height: 768px;
  overflow: hidden;
  display: grid;
  grid-template-columns: 165px 5px 1196px;
  grid-template-rows: 24px 30px 28px 28px 28px 30px 305px 30px 30px 172px 23px 40px;
  background: #efefef;
  color: #1c1c1c;
  font: 12px/16px "Noto Sans CJK SC", "Liberation Sans", sans-serif;
}
.ic { width: 16px; height: 16px; flex: none; display: block; }

.title {
  grid-column: 1 / -1;
  grid-row: 1;
  display: flex;
  align-items: center;
  gap: 5px;
  padding-left: 2px;
  background: #fff;
}
.title-text { font: 13px/20px "Liberation Sans", "Noto Sans CJK SC", sans-serif; letter-spacing: -0.16px; }
.winbtns { margin-left: auto; display: flex; gap: 32px; padding-right: 18px; }

.row { display: flex; align-items: center; min-width: 0; }
.r-menu { grid-column: 1 / -1; grid-row: 2; background: #f6f6f6; padding-bottom: 2px; }
.r-top { grid-column: 1 / -1; grid-row: 3; padding-bottom: 2px; }
.r-a { grid-column: 3; grid-row: 4; }
.r-b { grid-column: 3; grid-row: 5; }
.r-c { grid-column: 3; grid-row: 6; }
.r-snap { grid-column: 3; grid-row: 8; }
.r-tbl { grid-column: 3; grid-row: 9; background: linear-gradient(#fbfbfb, #ececec); }

.bar {
  flex: none;
  display: flex;
  align-items: center;
  height: 26px;
  box-sizing: border-box;
  background: #f6f6f6;
  border-radius: 2px;
}
.bar.plain { background: transparent; }
.bar.tab { background: #f9f9f9; height: 30px; margin-top: 0; padding-bottom: 2px; border-radius: 3px 3px 0 0; align-self: flex-start; }
.it { flex: none; display: flex; align-items: center; height: 24px; box-sizing: border-box; white-space: nowrap; }
.lbl { margin-left: 4px; }
.it > .lbl:first-child { margin-left: 0; }
.it.off { color: #999; }
.it.off .ic { opacity: .75; }
.it.green { color: #2c6a10; }
.it.on { background: #cfe5f8; border: 1px solid #2c86d4; padding-left: 2px; }
.caret {
  width: 0;
  height: 0;
  margin-left: 6px;
  border: 3px solid transparent;
  border-top: 3px solid #222;
  border-bottom: 0;
  flex: none;
}
.sep-line { display: block; width: 1px; height: 20px; background: #b5b5b5; }
.grip-dots {
  display: block;
  width: 2px;
  height: 18px;
  background: repeating-linear-gradient(#aaa 0 2px, transparent 2px 4px);
}
.more { font: 700 12px/10px "Liberation Sans", sans-serif; margin-top: -10px; }
.combo {
  display: flex;
  align-items: center;
  justify-content: space-between;
  width: 57px;
  height: 23px;
  padding: 0 4px 0 2px;
  box-sizing: border-box;
  background: #fff;
}
.r-b .combo { width: 70px; }
.r-b .it:nth-child(2) .combo { width: 58px; }
.num {
  display: flex;
  align-items: center;
  justify-content: flex-end;
  gap: 3px;
  width: 58px;
  height: 22px;
  box-sizing: border-box;
  padding-right: 2px;
  border: 1px solid #8a8a8a;
  color: #888;
  font-family: "Liberation Sans", sans-serif;
}
.r-snap .it:nth-last-child(2) .num { width: 67px; }
.chk { display: block; width: 12px; height: 12px; box-sizing: border-box; border: 1px solid #999; background: #fff; }

.nav {
  grid-column: 1;
  grid-row: 4 / 11;
  display: flex;
  flex-direction: column;
  padding-top: 2px;
}
.nav-head {
  display: flex;
  align-items: center;
  justify-content: space-between;
  height: 15px;
  padding-right: 2px;
  background: #0a5be0;
  color: #fff;
  margin-bottom: 1px;
}
.nav-btn {
  height: 20px;
  margin-bottom: 1px;
  border: 1px solid #a8a8a8;
  background: #f2f2f2;
  text-align: center;
  line-height: 21px;
}
.nav-box {
  display: flex;
  flex-direction: column;
  flex: 1;
  min-height: 0;
  margin: 0 0 1px;
  border: 1px solid #a8a8a8;
  padding: 0 2px 1px;
  background: #fff;
}
.plusminus { display: block; margin: 3px 0 0 3px; flex: none; }
.tree-wrap { display: flex; flex: 1; min-height: 0; border-top: 1px solid #bbb; }
.tree {
  flex: 1;
  min-width: 0;
  overflow: hidden;
  padding-top: 4px;
  font: 12px/16px "Liberation Mono", "Noto Sans CJK SC", monospace;
}
.tn {
  display: flex;
  align-items: center;
  height: 16px;
  white-space: nowrap;
  background-image: linear-gradient(#888 50%, transparent 50%);
  background-size: 1px 2px;
  background-repeat: repeat-y;
  background-position: 12px 0;
}
.tn.parent { padding-left: 7px; }
.tn.child {
  padding-left: 32px;
  background-image: linear-gradient(#888 50%, transparent 50%), linear-gradient(#888 50%, transparent 50%);
  background-size: 1px 2px, 1px 2px;
  background-position: 12px 0, 31px 0;
  background-repeat: repeat-y;
}
.tn.child.last {
  background-image: linear-gradient(#888 50%, transparent 50%), repeating-linear-gradient(#888 0 1px, transparent 1px 2px);
  background-repeat: repeat-y, no-repeat;
  background-size: 1px 2px, 1px 8px;
}
.chev { flex: none; width: 10px; margin-right: 1px; }
.conn { flex: none; display: block; width: 10px; height: 0; border-top: 1px dotted #777; }
.conn.short { width: 8px; }
.tn-name { margin-left: 5px; }
.parent .tn-name { margin-left: 2px; font-family: "Noto Sans CJK SC", sans-serif; }
.tn-body { display: flex; align-items: center; height: 16px; }
.tn-body.sel { background: #d6d6d6; margin-left: -2px; padding-left: 2px; width: 57px; }
.key { letter-spacing: -1.2px; }
.vscroll {
  flex: none;
  width: 16px;
  display: flex;
  flex-direction: column;
  align-items: center;
  padding-top: 8px;
  background: #f0f0f0;
}
.v-thumb { width: 16px; height: 262px; margin: 71px 0 97px; background: #c8c8c8; flex: none; }
.hscroll {
  flex: none;
  height: 16px;
  display: flex;
  align-items: center;
  background: #f0f0f0;
  border-top: 1px solid #fff;
}
.h-thumb { width: 102px; height: 15px; background: #c8c8c8; margin-right: 20px; }
.hscroll svg:last-child { margin-left: 2px; }

.canvas { grid-column: 3; grid-row: 7; display: block; }
.cv-bubble { font: 15px "Liberation Sans", sans-serif; text-anchor: middle; }
.cv-dim { font: 15px "DejaVu Sans", sans-serif; fill: #d8d8d8; letter-spacing: -1px; }

.sheet {
  grid-column: 3;
  grid-row: 10;
  display: flex;
  flex-direction: column;
  padding-left: 13px;
  overflow: hidden;
  box-sizing: border-box;
  border-bottom: 1px solid #b0b0b0;
  background:
    linear-gradient(#fff, #fff) 13px 0 / 100% 100% no-repeat,
    repeating-linear-gradient(#c4c4c4 0 2px, transparent 2px 4px) 4px 0 / 2px 100% no-repeat,
    repeating-linear-gradient(#c4c4c4 0 2px, transparent 2px 4px) 8px 0 / 2px 100% no-repeat,
    #f0f0f0;
}
.grid {
  table-layout: fixed;
  border-collapse: collapse;
  width: 1182px;
  flex: none;
  margin-top: 1px;
  font: 12px/18px "Noto Sans CJK SC", sans-serif;
}
.grid th, .grid td {
  border: 1px solid #c4c4c4;
  height: 18px;
  padding: 0;
  overflow: hidden;
  white-space: nowrap;
}
.grid th { font-weight: 400; background: linear-gradient(#fff, #ededed); text-align: center; }
.grid th.hot { background: linear-gradient(#f9dca2, #f1bf63); color: #5a1a80; }
.grid th.cut { text-align: left; padding-left: 3px; }
.grid td {
  padding-left: 2px;
  font: 12px/18px "Liberation Mono", "Noto Sans CJK SC", monospace;
  letter-spacing: -1.150px;
}
.grid th.rowno { font-family: "Liberation Mono", monospace; background: linear-gradient(#fff, #ededed); }
.grid td.frz { border-right: 2px solid #000; }
.cur td { background: #a6c9ef; }
.grid .cur th.rowno { background: #fdd38c; color: #a01a60; }
.grid td.focus { position: relative; background: #8abbee; box-shadow: inset 0 0 0 2px #000; overflow: visible; }
.focus::after {
  content: "";
  position: absolute;
  right: -2px;
  bottom: -2px;
  width: 4px;
  height: 4px;
  background: #000;
}
.sheet-scroll {
  display: flex;
  align-items: center;
  flex: none;
  height: 15px;
  margin-top: 57px;
  background: #f0f0f0;
}
.sheet-thumb { width: 546px; height: 15px; margin: 0 171px 0 431px; background: #c8c8c8; flex: none; }

.status {
  grid-column: 1 / -1;
  grid-row: 11;
  display: flex;
  align-items: center;
  gap: 3px;
  padding-top: 1px;
  font: 12px/20px "Noto Sans CJK SC", sans-serif;
}
.st { height: 20px; box-sizing: border-box; border: 1px solid #dcdcdc; background: #f5f5f5; padding-left: 1px; flex: none; white-space: nowrap; overflow: hidden; line-height: 18px; }
.st b { font: 12px "Liberation Mono", monospace; letter-spacing: -1.200px; }
.mono { font: 12px/18px "Liberation Mono", monospace; letter-spacing: -1.200px; }
.w1 { width: 147px; }
.w2 { width: 77px; }
.w3 { width: 97px; }
.w4 { width: 48px; }
.msg { width: 913px; letter-spacing: .1px; }
.w6 { width: 70px; }

.taskbar {
  grid-column: 1 / -1;
  grid-row: 12;
  display: flex;
  align-items: center;
  background: #050f18;
  color: #e8e8e8;
}
.start { width: 48px; height: 40px; display: flex; align-items: center; justify-content: center; background: #000; flex: none; }
.search {
  width: 344px;
  height: 40px;
  box-sizing: border-box;
  display: flex;
  align-items: center;
  padding-left: 10px;
  background: #333;
  color: #8a8a8a;
  font-size: 14px;
  flex: none;
}
.search span { margin-left: 6px; width: 281px; }
.tb {
  flex: none;
  width: 50px;
  height: 40px;
  box-sizing: border-box;
  display: flex;
  align-items: center;
  justify-content: center;
}
.search + .tb { margin-left: -1px; }
.run { border-bottom: 2px solid #6fb4ee; padding-top: 2px; }
.now { background: #2e3a42; }
.tray-link { margin-left: 32px; color: #ccc; width: 25px; flex: none; }
.cpu { margin-left: 12px; width: 60px; flex: none; display: flex; flex-direction: column; align-items: center; line-height: 17px; padding-top: 2px; }
.t1 { margin-left: 12px; flex: none; }
.t2 { margin-left: 7px; flex: none; }
.t3 { margin-left: 5px; flex: none; }
.t4 { margin-left: 7px; flex: none; }
.t5 { margin-left: 6px; width: 14px; flex: none; font-size: 14px; font-weight: 700; color: #fff; }
.t6 { margin-left: 14px; flex: none; }
.clock { margin-left: 15px; width: 70px; flex: none; display: flex; flex-direction: column; align-items: center; line-height: 19px; font-family: "Liberation Sans", sans-serif; }
.notif { position: relative; flex: none; width: 48px; height: 40px; display: flex; align-items: center; justify-content: center; }
.badge {
  position: absolute;
  left: 16px;
  top: 15px;
  width: 18px;
  height: 18px;
  border-radius: 50%;
  background: #444;
  border: 1px solid #bbb;
  box-sizing: border-box;
  text-align: center;
  font: 700 11px/16px "Liberation Sans", sans-serif;
  color: #fff;
}
.edge { display: block; flex: none; width: 1px; height: 40px; background: #3a444c; }

.ball {
  position: absolute;
  left: 838px;
  top: -24px;
  width: 44px;
  height: 44px;
  box-sizing: border-box;
  padding-top: 26px;
  border-radius: 50%;
  border: 1px solid #aaa;
  background: #2fa84f;
  box-shadow: 0 1px 2px rgba(0, 0, 0, .4);
  text-align: center;
  color: #fff;
  font: 700 12px/14px "Liberation Sans", sans-serif;
}
.ime {
  position: absolute;
  left: 1020px;
  top: 23px;
  width: 179px;
  height: 19px;
  box-sizing: border-box;
  display: flex;
  align-items: center;
  gap: 8px;
  padding-left: 7px;
  background: rgba(255, 255, 255, .92);
  border: 1px solid #b4c8dc;
  color: #1a70c0;
}
.ime b { font-size: 14px; font-weight: 700; }
.ime-c { font: 700 12px "Liberation Sans", sans-serif; width: 12px; }
.ime-s { position: absolute; left: -28px; top: -8px; }
.marks { position: absolute; left: 0; top: 0; pointer-events: none; fill: none; stroke: #f00; stroke-width: 3; }
</style>
